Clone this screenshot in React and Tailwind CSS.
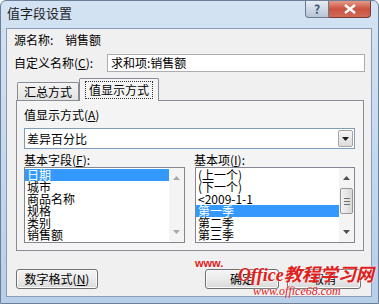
import React from "react";

const font = "font-['Noto_Sans_CJK_SC','Noto_Sans_CJK_JP',sans-serif]";

const VistaButton = ({ children, className = "" }) => (
  <div
    className={`h-[20px] rounded-[3px] border border-[#707070] bg-gradient-to-b from-[#f4f4f4] via-[#ebebeb] to-[#d9d9d9] shadow-[inset_0_0_0_1px_#fcfcfc] flex items-center justify-center text-[12px] leading-[12px] text-black ${className}`}
  >
    {children}
  </div>
);

const Arrow = ({ up, color = "#a0a0a0" }) => (
  <svg width="7" height="4" viewBox="0 0 7 4">
    <path d={up ? "M0 4 L3.5 0 L7 4 Z" : "M0 0 L3.5 4 L7 0 Z"} fill={color} />
  </svg>
);

const ListBox = ({ items, selected, thumb }) => (
  <div className="h-[76px] border border-[#828790] bg-white flex">
    <div className="flex-1 flex flex-col pt-[1px] overflow-hidden">
      {items.map((item) => (
        <div
          key={item}
          className={`h-[12px] leading-[12px] text-[12px] pl-[2px] whitespace-nowrap ${
            item === selected ? "bg-[#3399ff] text-white" : "text-black"
          }`}
        >
          {item}
        </div>
      ))}
    </div>
    <div className="w-[15px] bg-[#f4f4f4] flex flex-col">
      <div className="h-[20px] flex items-center justify-center">
        <Arrow up color={thumb ? "#505050" : "#a8a8a8"} />
      </div>
      <div className="flex-1 flex flex-col items-center pt-[0px]">
        {thumb && (
          <div className="w-[13px] h-[26px] rounded-[2px] border border-[#979797] bg-gradient-to-r from-[#f2f2f2] to-[#d8d8d8] flex flex-col items-center justify-center gap-[2px]">
            <div className="w-[6px] h-px bg-[#707070]" />
            <div className="w-[6px] h-px bg-[#707070]" />
            <div className="w-[6px] h-px bg-[#707070]" />
          </div>
        )}
      </div>
      <div className="h-[20px] flex items-center justify-center">
        <Arrow color={thumb ? "#505050" : "#a8a8a8"} />
      </div>
    </div>
  </div>
);

export default function App() {
  return (
    <div
      className={`relative w-[379px] h-[304px] overflow-hidden bg-gradient-to-b from-[#d3e3f3] to-[#b7cfe8] border border-[#6b7f99] rounded-t-[6px] ${font}`}
    >
      {/* title bar */}
      <div className="h-[27px] flex items-start">
        <div className="pl-[6px] pt-[4px] text-[13px] leading-[16px] text-[#1e1e1e]">
          值字段设置
        </div>
        <div className="ml-auto mr-[7px] flex">
          <div className="w-[24px] h-[17px] rounded-bl-[4px] border border-t-0 border-[#6d7a8c] bg-gradient-to-b from-[#e6edf5] to-[#b6c4d4] flex items-center justify-center text-[12px] leading-[12px] text-[#40566e] font-bold">
            ?
          </div>
          <div className="w-[42px] h-[17px] rounded-br-[4px] border border-l-0 border-t-0 border-[#7a3b36] bg-gradient-to-b from-[#e49a8a] via-[#c9523f] to-[#cf6b58] flex items-center justify-center">
            <svg width="12" height="10" viewBox="0 0 12 10">
              <path d="M1 1 L11 9 M11 1 L1 9" stroke="#ffffff" strokeWidth="2.4" />
            </svg>
          </div>
        </div>
      </div>

      {/* client area */}
      <div className="ml-[5px] w-[366px] h-[269px] bg-[#f0f0f0] border border-[#8a9cb3] text-[12px] leading-[12px] text-black">
        <div className="mt-[5px] ml-[7px] h-[12px] flex">
          <span className="w-[51px]">源名称:</span>
          <span>销售额</span>
        </div>

        <div className="mt-[8px] ml-[7px] h-[18px] flex items-center">
          <span className="w-[93px]">
            自定义名称(<span className="underline">C</span>):
          </span>
          <div className="w-[258px] h-[18px] border border-[#abadb3] bg-white flex items-center pl-[3px]">
            求和项:销售额
          </div>
        </div>

        {/* tabs */}
        <div className="mt-[6px] ml-[9px] h-[22px] flex items-end">
          <div className="ml-[1px] w-[62px] h-[18px] border border-b-0 border-[#898c95] rounded-t-[2px] bg-gradient-to-b from-[#f4f4f4] to-[#e3e3e3] flex items-center justify-center">
            汇总方式
          </div>
          <div className="relative z-10 -mb-px w-[80px] h-[23px] border border-b-0 border-[#898c95] rounded-t-[2px] bg-[#f4f4f4] flex items-center justify-center">
            <span className="px-[3px] py-[2px] border border-dotted border-[#333]">
              值显示方式
            </span>
          </div>
        </div>

        {/* tab panel */}
        <div className="ml-[9px] w-[348px] h-[151px] border border-[#898c95] bg-[#f4f4f4] px-[7px] pt-[8px]">
          <div className="h-[12px]">
            值显示方式(<span className="underline">A</span>)
          </div>
          <div className="mt-[7px] w-[331px] h-[21px] border border-[#7f9db9] bg-white flex items-center pl-[2px]">
            <span className="flex-1">差异百分比</span>
            <div className="mr-[1px] w-[15px] h-[17px] border border-[#a4a4a4] rounded-[2px] bg-gradient-to-b from-[#f6f6f6] to-[#dcdcdc] flex items-center justify-center">
              <Arrow color="#1e1e1e" />
            </div>
          </div>

          <div className="mt-[5px] flex">
            <div className="w-[161px] flex flex-col">
              <div className="h-[12px] mb-[1px]">
                基本字段(<span className="underline">F</span>):
              </div>
              <ListBox
                items={["日期", "城市", "商品名称", "规格", "类别", "销售额"]}
                selected="日期"
              />
            </div>
            <div className="ml-[10px] w-[160px] flex flex-col">
              <div className="h-[12px] mb-[1px] -ml-[1px]">
                基本项(<span className="underline">I</span>):
              </div>
              <ListBox
                items={["(上一个)", "(下一个)", "<2009-1-1", "第一季", "第二季", "第三季"]}
                selected="第一季"
                thumb
              />
            </div>
          </div>
        </div>

        {/* buttons */}
        <div className="mt-[18px] flex">
          <VistaButton className="ml-[9px] w-[82px]">
            数字格式(<span className="underline">N</span>)
          </VistaButton>
          <VistaButton className="ml-auto w-[74px]">确定</VistaButton>
          <VistaButton className="ml-[8px] mr-[10px] w-[74px]">取消</VistaButton>
        </div>
      </div>

      {/* watermark */}
      <div className="absolute left-[194px] top-[257px] text-[11px] leading-[11px] font-bold text-[#e0201a] font-['Liberation_Sans',sans-serif]">
        www.
      </div>
      <div className="absolute left-[237px] top-[264px] text-[18px] leading-[20px] font-bold italic text-[#e0201a] font-['Liberation_Serif','Noto_Sans_CJK_SC',serif] [text-shadow:0_0_2px_#ffffff]">
        Office教程学习网
      </div>
      <div className="absolute left-[252px] top-[284px] text-[12px] leading-[12px] italic text-[#e0201a] font-['Liberation_Serif',serif] [text-shadow:0_0_2px_#ffffff]">
        www.office68.com
      </div>
    </div>
  );
}
